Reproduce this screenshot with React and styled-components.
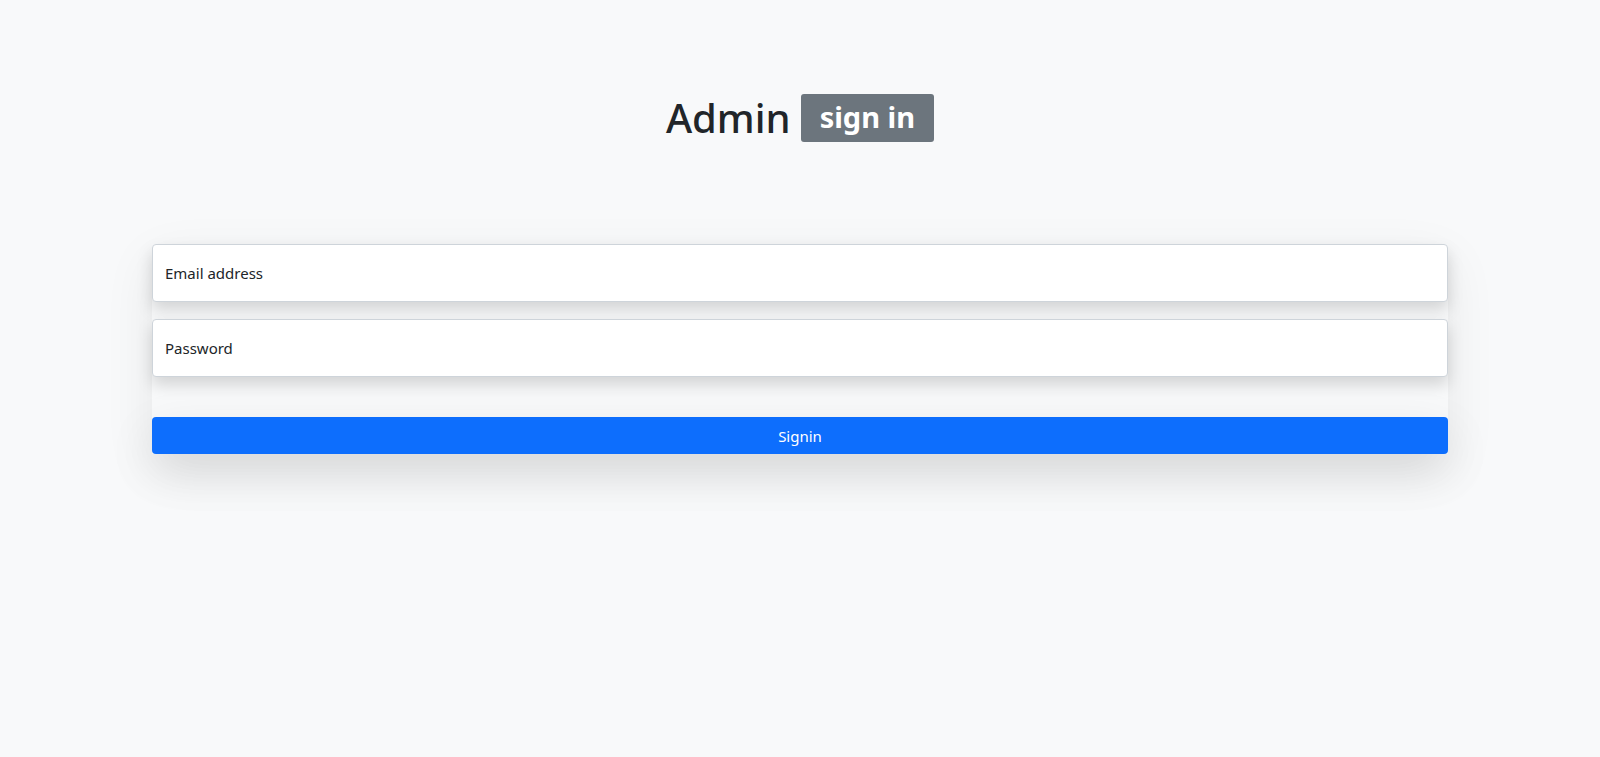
import React from "react";
import styled, { createGlobalStyle } from "styled-components";

const Global = createGlobalStyle`
  body {
    margin: 0;
    background: #f8f9fa;
    font-family: "Segoe UI", "Noto Sans", "Open Sans", sans-serif;
    color: #212529;
  }
`;

const Page = styled.div`
  min-height: 757px;
  padding-top: 94px;
  box-sizing: border-box;
`;

const Title = styled.h1`
  margin: 0;
  display: flex;
  justify-content: center;
  align-items: center;
  gap: 10px;
  font-size: 40px;
  font-weight: 500;
  line-height: 1.2;
`;

const Badge = styled.span`
  background: #6c757d;
  color: #fff;
  font-size: 29px;
  font-weight: 700;
  padding: 4px 19px 6px;
  border-radius: 3px;
  line-height: 1.3;
`;

const Form = styled.form`
  width: 81%;
  margin: 102px auto 0;
  display: flex;
  flex-direction: column;
  gap: 17px;
  box-shadow: 0 16px 48px rgba(0, 0, 0, 0.075);
`;

const Input = styled.input`
  height: 56px;
  padding: 0 12px;
  border: 1px solid #ced4da;
  border-radius: 4px;
  background: #fff;
  font: inherit;
  font-size: 15px;
  box-shadow: 0 8px 16px rgba(0, 0, 0, 0.15);
  &::placeholder { color: #212529; }
`;

const Button = styled.button`
  margin-top: 23px;
  height: 37px;
  border: none;
  border-radius: 4px;
  background: #0d6efd;
  color: #fff;
  font: inherit;
  font-size: 15px;
  box-shadow: 0 16px 48px rgba(0, 0, 0, 0.1);
`;

export default function App() {
  return (
    <Page>
      <Global />
      <Title>
        Admin <Badge>sign in</Badge>
      </Title>
      <Form onSubmit={(e) => e.preventDefault()}>
        <Input type="email" placeholder="Email address" />
        <Input type="password" placeholder="Password" />
        <Button type="submit">Signin</Button>
      </Form>
    </Page>
  );
}
